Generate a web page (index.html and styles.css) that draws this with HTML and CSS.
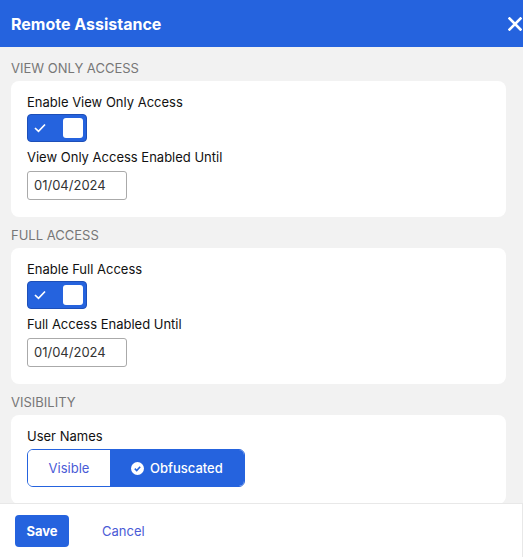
FILE: index.html
```html
<!DOCTYPE html>
<html lang="en">
<head>
  <meta charset="UTF-8" />
  <title>Remote Assistance</title>
  <link rel="stylesheet" href="styles.css">
</head>
<body>
  <div class="dialog">
    <!-- Header -->
    <div class="dialog-header">
      <h1>Remote Assistance</h1>
      <button class="close-btn" aria-label="Close">
        <svg width="14" height="14" viewBox="0 0 14 14"><path d="M1.5 1.5 L12.5 12.5 M12.5 1.5 L1.5 12.5" stroke="#fff" stroke-width="2.6" stroke-linecap="square"/></svg>
      </button>
    </div>

    <!-- Content -->
    <div class="dialog-body">
      <div class="section-label">View Only Access</div>
      <div class="card">
        <div class="field-label">Enable View Only Access</div>
        <div class="toggle on">
          <svg class="toggle-check" width="12" height="10" viewBox="0 0 12 10"><path d="M1 5 L4.5 8.3 L11 1.5" fill="none" stroke="#fff" stroke-width="1.7"/></svg>
          <span class="knob"></span>
        </div>
        <div class="field-label">View Only Access Enabled Until</div>
        <div class="date-input">01/04/2024</div>
      </div>

      <div class="section-label">Full Access</div>
      <div class="card">
        <div class="field-label">Enable Full Access</div>
        <div class="toggle on">
          <svg class="toggle-check" width="12" height="10" viewBox="0 0 12 10"><path d="M1 5 L4.5 8.3 L11 1.5" fill="none" stroke="#fff" stroke-width="1.7"/></svg>
          <span class="knob"></span>
        </div>
        <div class="field-label">Full Access Enabled Until</div>
        <div class="date-input">01/04/2024</div>
      </div>

      <div class="section-label">Visibility</div>
      <div class="card">
        <div class="field-label">User Names</div>
        <div class="segmented">
          <button class="seg">Visible</button>
          <button class="seg active">
            <svg width="13" height="13" viewBox="0 0 13 13"><circle cx="6.5" cy="6.5" r="6.5" fill="#fff"/><path d="M3.8 6.7 L5.7 8.5 L9.2 4.8" fill="none" stroke="#2563de" stroke-width="1.6"/></svg>
            Obfuscated
          </button>
        </div>
      </div>
    </div>

    <!-- Footer -->
    <div class="dialog-footer">
      <button class="btn-primary">Save</button>
      <button class="btn-link">Cancel</button>
    </div>
  </div>
</body>
</html>
```

FILE: styles.css
```css
:root {
  --blue: #2563de;
  --blue-dark: #1d4fb8;
  --link: #4a5bd6;
  --label: #777;
  --text: #111;
}

body {
  margin: 0;
  font-family: Inter, "Noto Sans", sans-serif;
  color: var(--text);
  background: #f2f2f2;
}

.dialog {
  width: 523px;
  height: 557px;
  display: flex;
  flex-direction: column;
  overflow: hidden;
}

.dialog-header {
  height: 47px;
  flex-shrink: 0;
  background: var(--blue);
  display: flex;
  align-items: center;
  justify-content: space-between;
  padding: 0 1px 0 11px;
}

.dialog-header h1 {
  margin: 0;
  font-size: 16px;
  font-weight: 700;
  color: #fff;
}

.close-btn {
  background: none;
  border: none;
  padding: 0;
  width: 14px;
  height: 14px;
  display: flex;
  cursor: pointer;
}

.dialog-body {
  flex: 1;
  padding: 13px 17px 0 11px;
  overflow: hidden;
}

.section-label {
  font-size: 13px;
  line-height: 16px;
  text-transform: uppercase;
  color: var(--label);
  margin-bottom: 5px;
}

.card {
  background: #fff;
  border-radius: 8px;
  padding: 13px 16px 17px;
  margin-bottom: 10px;
}

.field-label {
  font-size: 13px;
  line-height: 16px;
  margin-bottom: 4px;
}

.toggle {
  height: 26px;
  width: 49px;
  border: 1px solid var(--blue-dark);
  border-radius: 4px;
  background: var(--blue);
  display: flex;
  align-items: center;
  justify-content: space-between;
  padding: 0 3px 0 6px;
  box-sizing: content-box;
  margin-bottom: 7px;
}

.toggle-check {
  display: block;
}

.knob {
  width: 20px;
  height: 20px;
  background: #fff;
  border-radius: 3px;
}

.date-input {
  width: 100px;
  height: 29px;
  box-sizing: border-box;
  border: 1px solid #aaa;
  border-radius: 3px;
  font-size: 13px;
  line-height: 27px;
  padding-left: 6px;
  color: #333;
  margin-top: 6px;
}

.segmented {
  display: inline-flex;
  height: 38px;
  margin-top: 1px;
  border: 1px solid var(--blue);
  border-radius: 6px;
  overflow: hidden;
  box-sizing: border-box;
}

.seg {
  font-family: inherit;
  font-size: 13px;
  border: none;
  background: #fff;
  color: var(--link);
  cursor: pointer;
  display: flex;
  align-items: center;
  gap: 6px;
}

.seg:first-child {
  width: 82px;
  justify-content: center;
}

.seg.active {
  width: 134px;
  background: var(--blue);
  color: #fff;
  font-weight: 500;
  padding-left: 21px;
}

.dialog-footer {
  height: 54px;
  flex-shrink: 0;
  background: #fff;
  border-top: 1px solid #e8e8e8;
  border-right: 1px solid #e8e8e8;
  box-sizing: border-box;
  display: flex;
  align-items: center;
  padding: 0 15px;
  gap: 17px;
}

.btn-primary {
  width: 54px;
  height: 32px;
  background: var(--blue);
  color: #fff;
  font-family: inherit;
  font-size: 13px;
  font-weight: 700;
  border: none;
  border-radius: 4px;
  cursor: pointer;
}

.btn-link {
  background: none;
  border: none;
  color: var(--link);
  font-family: inherit;
  font-size: 13px;
  padding: 0 16px;
  cursor: pointer;
}
```
